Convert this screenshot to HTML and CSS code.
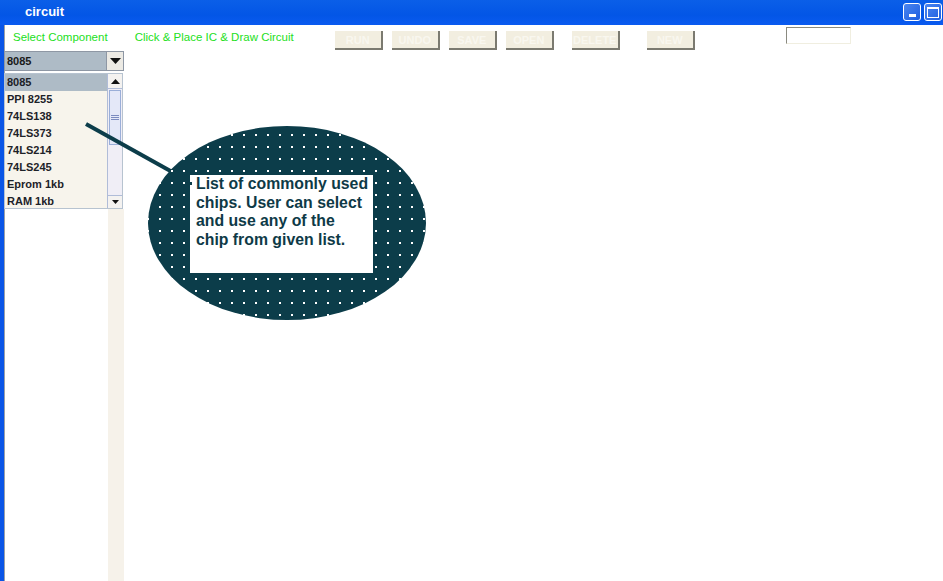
FILE: index.html
```html
<!DOCTYPE html>
<html>
<head>
<meta charset="utf-8">
<link rel="stylesheet" href="styles.css">
</head>
<body>
<div class="window">
  <div class="titlebar">
    <span class="title">circuit</span>
    <div class="winbtns">
      <span class="wbtn"><span class="minbar"></span></span>
      <span class="wbtn"><span class="maxbox"></span></span>
    </div>
  </div>
  <div class="body">
    <div class="toolbar">
      <span class="label l1">Select Component</span>
      <span class="label l2">Click &amp; Place IC &amp; Draw Circuit</span>
      <div class="buttons">
        <span class="btn">RUN</span>
        <span class="btn">UNDO</span>
        <span class="btn">SAVE</span>
        <span class="btn b4">OPEN</span>
        <span class="btn b5">DELETE</span>
        <span class="btn">NEW</span>
      </div>
      <span class="field"></span>
    </div>
    <div class="main">
      <div class="sidebar">
        <div class="combo">
          <span class="combo-val">8085</span>
          <span class="combo-arrow"><svg width="11" height="6" viewBox="0 0 11 6"><path d="M0 0H11L5.5 6Z" fill="#111"/></svg></span>
        </div>
        <div class="list">
          <ul class="items">
            <li class="sel">8085</li>
            <li>PPI 8255</li>
            <li>74LS138</li>
            <li>74LS373</li>
            <li>74LS214</li>
            <li>74LS245</li>
            <li>Eprom 1kb</li>
            <li>RAM 1kb</li>
          </ul>
          <div class="scroll">
            <span class="sbtn"><svg width="9" height="5" viewBox="0 0 9 5"><path d="M0 5H9L4.5 0Z" fill="#111"/></svg></span>
            <span class="thumb"><span class="grip"></span></span>
            <span class="track"></span>
            <span class="sbtn"><svg width="7" height="4" viewBox="0 0 7 4"><path d="M0 0H7L3.5 4Z" fill="#111"/></svg></span>
          </div>
        </div>
        <div class="filler"><span class="strip"></span></div>
      </div>
      <div class="canvas"></div>
    </div>
  </div>
  <svg class="callout" width="943" height="581" viewBox="0 0 943 581">
    <defs>
      <pattern id="dots" x="3" y="2" width="12" height="12" patternUnits="userSpaceOnUse">
        <rect width="12" height="12" fill="#0c3d4a"/>
        <rect x="0" y="0" width="2" height="2" fill="#ffffff"/>
      </pattern>
    </defs>
    <line x1="86" y1="124" x2="192" y2="183" stroke="#0c3d4a" stroke-width="4"/>
    <ellipse cx="287" cy="223" rx="139" ry="97" fill="url(#dots)"/>
    <rect x="190" y="175" width="183" height="98" fill="#ffffff"/>
    <rect x="189" y="182" width="3" height="3" fill="#0c3d4a"/>
  </svg>
  <div class="note">List of commonly used<br>chips. User can select<br>and use any of the<br>chip from given list.</div>
</div>
</body>
</html>
```
FILE: styles.css
```css
* { box-sizing: border-box; }
html, body { margin: 0; padding: 0; }
body { width: 943px; height: 581px; overflow: hidden; background: #fff; font-family: "Liberation Sans", Arial, sans-serif; }

.window { position: relative; width: 943px; height: 581px; display: flex; flex-direction: column; }

.titlebar {
  height: 25px; flex: none;
  background: linear-gradient(#0b5fe8, #0356e6 60%, #0a5af0);
  display: flex; align-items: center; justify-content: space-between;
  padding: 0 1px 0 25px;
}
.title { color: #fff; font-weight: bold; font-size: 13px; margin-top: -2px; }
.winbtns { display: flex; gap: 3px; margin-top: -1px; }
.wbtn {
  width: 18px; height: 18px; border: 1px solid #fff; border-radius: 3px;
  background: linear-gradient(135deg, #4a86f0, #1e5ee0);
  display: flex; align-items: center; justify-content: center; position: relative;
}
.minbar { width: 7px; height: 3px; background: #fff; margin-top: 6px; }
.maxbox { width: 12px; height: 11px; border: 1px solid #fff; border-top-width: 2px; }

.body { flex: 1; display: flex; flex-direction: column; border-left: 4px solid #0a55e6; box-shadow: inset 1px 0 0 #9aa0a8; }

.toolbar { height: 25px; flex: none; position: relative; display: flex; align-items: flex-start; }
.label { color: #22e022; font-size: 11.5px; margin-top: 6px; white-space: nowrap; }
.l1 { margin-left: 9px; }
.l2 { margin-left: 27px; }
.buttons { display: flex; margin-left: 41px; margin-top: 6px; }
.btn {
  width: 48px; height: 19px; margin-right: 9px;
  background: #f2eee0;
  border-right: 2px solid #7b7a70; border-bottom: 2px solid #7b7a70;
  color: #f9f7ef; font-size: 11px; font-weight: bold;
  display: flex; align-items: center; justify-content: center; overflow: hidden;
}
.b4 { margin-right: 18px; }
.b5 { margin-right: 27px; }
.field {
  position: absolute; left: 782px; top: 2px;
  width: 65px; height: 17px;
  border-top: 1px solid #8a8a80; border-left: 1px solid #8a8a80;
  border-right: 1px solid #f0eee0; border-bottom: 1px solid #f0eee0;
  background: #fff;
}

.main { flex: 1; display: flex; }
.sidebar { width: 120px; flex: none; display: flex; flex-direction: column; padding-top: 1px; }
.combo {
  height: 20px; display: flex;
  border: 1px solid #8e97a4; background: #aebbc6;
}
.combo-val { flex: 1; font-size: 11px; font-weight: bold; color: #1a1a1a; padding-left: 2px; line-height: 18px; }
.combo-arrow { width: 17px; background: #eceae4; border-left: 1px solid #8e97a4; display: flex; align-items: center; justify-content: center; }

.list { margin-top: 2px; height: 136px; display: flex; border: 1px solid #b7c3d0; background: #f7f4ec; width: 119px; }
.items { list-style: none; margin: 0; padding: 0; flex: 1; }
.items li { height: 17px; line-height: 17px; font-size: 11px; font-weight: bold; color: #1d2228; padding-left: 2px; white-space: nowrap; }
.items li.sel { background: #aebbc6; }
.scroll { width: 15px; display: flex; flex-direction: column; border-left: 1px solid #b0bcd8; background: #f0eef6; }
.sbtn { height: 15px; display: flex; align-items: center; justify-content: center; background: #f4f2f0; border-bottom: 1px solid #b0bcd8; }
.sbtn:last-child { border-bottom: none; border-top: 1px solid #b0bcd8; height: 13px; }
.thumb { height: 55px; margin: 1px 1px 0; border: 1px solid #9aaed8; background: #e4e8f8; display: flex; align-items: center; justify-content: center; }
.grip { width: 8px; height: 5px; border-top: 1px solid #7c8cc0; border-bottom: 1px solid #7c8cc0; position: relative; }
.grip::after { content: ""; position: absolute; left: 0; right: 0; top: 1px; height: 1px; background: #7c8cc0; }
.track { flex: 1; }

.filler { flex: 1; display: flex; justify-content: flex-end; }
.strip { width: 16px; background: #f6f2ea; }

.canvas { flex: 1; background: #fff; }

.callout { position: absolute; left: 0; top: 0; pointer-events: none; }
.note {
  position: absolute; left: 196px; top: 175px; width: 178px;
  font-size: 15.8px; font-weight: bold; line-height: 18.7px; color: #0e3a47; white-space: nowrap;
}
```
